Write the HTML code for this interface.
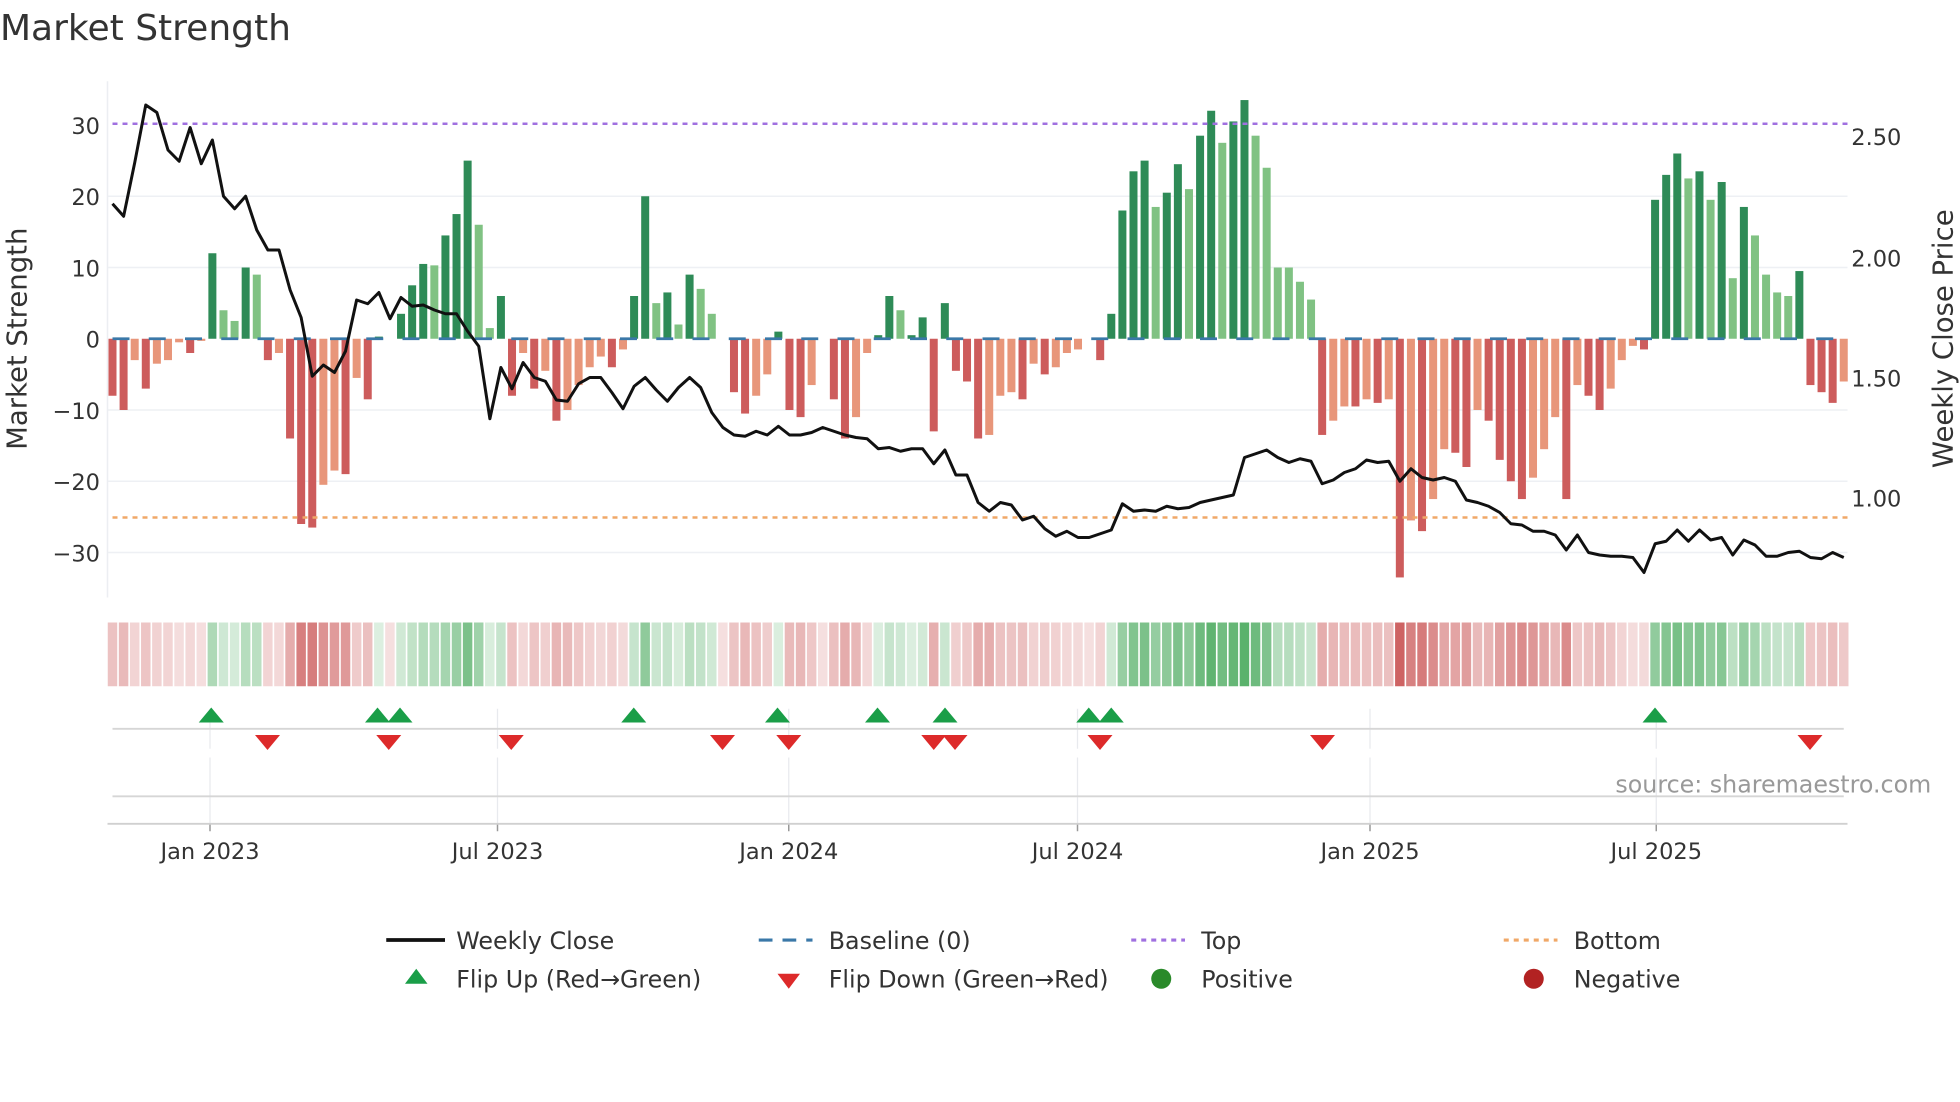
<!DOCTYPE html>
<html><head><meta charset="utf-8"><style>
html,body{margin:0;padding:0;background:#fff;width:1960px;height:1102px;overflow:hidden}
svg{display:block;font-family:"DejaVu Sans","Liberation Sans",sans-serif}
</style></head><body>
<svg id="s" width="1960" height="1102" viewBox="0 0 1568 881.6" xmlns="http://www.w3.org/2000/svg">
<text x="0" y="32" font-size="28.8" fill="#333">Market Strength</text>
<g id="grid"></g>
<g id="bars"></g>
<g id="lines"></g>
<g id="heat"></g>
<g id="marks"></g>
<text x="1545" y="634" font-size="19" fill="#999" text-anchor="end">source: sharemaestro.com</text>
<g font-size="18" fill="#333">
<text x="80" y="107" text-anchor="end">30</text>
<text x="80" y="164" text-anchor="end">20</text>
<text x="80" y="221" text-anchor="end">10</text>
<text x="80" y="278" text-anchor="end">0</text>
<text x="80" y="335" text-anchor="end">−10</text>
<text x="80" y="392" text-anchor="end">−20</text>
<text x="80" y="449" text-anchor="end">−30</text>
<text x="1481" y="116">2.50</text>
<text x="1481" y="213">2.00</text>
<text x="1481" y="309">1.50</text>
<text x="1481" y="405">1.00</text>
<text x="168" y="687" text-anchor="middle">Jan 2023</text>
<text x="398" y="687" text-anchor="middle">Jul 2023</text>
<text x="631" y="687" text-anchor="middle">Jan 2024</text>
<text x="862" y="687" text-anchor="middle">Jul 2024</text>
<text x="1096" y="687" text-anchor="middle">Jan 2025</text>
<text x="1325" y="687" text-anchor="middle">Jul 2025</text>
</g>
<text transform="translate(21,271) rotate(-90)" font-size="22" fill="#333" text-anchor="middle">Market Strength</text>
<text transform="translate(1562,271) rotate(-90)" font-size="22" fill="#333" text-anchor="middle">Weekly Close Price</text>
<g font-size="19" fill="#333">
<line x1="309" y1="752" x2="356" y2="752" stroke="#111" stroke-width="3"/>
<text x="365" y="759">Weekly Close</text>
<line x1="607" y1="752" x2="650" y2="752" stroke="#3a78a8" stroke-width="2.5" stroke-dasharray="11,8"/>
<text x="663" y="759">Baseline (0)</text>
<line x1="905" y1="752" x2="948" y2="752" stroke="#a070e0" stroke-width="2.5" stroke-dasharray="4,4"/>
<text x="961" y="759">Top</text>
<line x1="1203" y1="752" x2="1246" y2="752" stroke="#f0a868" stroke-width="2.5" stroke-dasharray="4,4"/>
<text x="1259" y="759">Bottom</text>
<path d="M333 775 L342 787 L324 787 Z" fill="#1a9e48"/>
<text x="365" y="790">Flip Up (Red→Green)</text>
<path d="M622 779 L640 779 L631 791 Z" fill="#dd2a2a"/>
<text x="663" y="790">Flip Down (Green→Red)</text>
<circle cx="929" cy="783" r="8" fill="#2a8a2a"/>
<text x="961" y="790">Positive</text>
<circle cx="1227" cy="783" r="8" fill="#b22222"/>
<text x="1259" y="790">Negative</text>
</g>
</svg>
<script>
var NS="http://www.w3.org/2000/svg";
function el(p,t,a){var e=document.createElementNS(NS,t);for(var k in a)e.setAttribute(k,a[k]);document.getElementById(p).appendChild(e);return e;}
var B=[[-8,1],[-10,1],[-3,0],[-7,1],[-3.5,0],[-3,0],[-0.5,0],[-2,1],[-0.3,0],[12,1],[4,0],[2.5,0],[10,1],[9,0],[-3,1],[-2,0],[-14,1],[-26,1],[-26.5,1],[-20.5,0],[-18.5,0],[-19,1],[-5.5,0],[-8.5,1],[0.3,1],[0,1],[3.5,1],[7.5,1],[10.5,1],[10.3,0],[14.5,1],[17.5,1],[25,1],[16,0],[1.5,0],[6,1],[-8,1],[-2,0],[-7,1],[-4.5,0],[-11.5,1],[-10,0],[-6.5,0],[-4,0],[-2.5,0],[-4,1],[-1.5,0],[6,1],[20,1],[5,0],[6.5,1],[2,0],[9,1],[7,0],[3.5,0],[0,1],[-7.5,1],[-10.5,1],[-8,0],[-5,0],[1,1],[-10,1],[-11,1],[-6.5,0],[0,1],[-8.5,1],[-14,1],[-11,0],[-2,0],[0.5,1],[6,1],[4,0],[0.5,1],[3,1],[-13,1],[5,1],[-4.5,1],[-6,1],[-14,1],[-13.5,0],[-8,0],[-7.5,0],[-8.5,1],[-3.5,0],[-5,1],[-4,0],[-2,0],[-1.5,0],[0,1],[-3,1],[3.5,1],[18,1],[23.5,1],[25,1],[18.5,0],[20.5,1],[24.5,1],[21,0],[28.5,1],[32,1],[27.5,0],[30.5,1],[33.5,1],[28.5,0],[24,0],[10,0],[10,0],[8,0],[5.5,0],[-13.5,1],[-11.5,0],[-9.5,0],[-9.5,1],[-8.5,0],[-9,1],[-8.5,0],[-33.5,1],[-25.5,0],[-27,1],[-22.5,0],[-15.5,0],[-16,1],[-18,1],[-10,0],[-11.5,1],[-17,1],[-20,1],[-22.5,1],[-19.5,0],[-15.5,0],[-11,0],[-22.5,1],[-6.5,0],[-8,1],[-10,1],[-7,0],[-3,0],[-1,0],[-1.5,1],[19.5,1],[23,1],[26,1],[22.5,0],[23.5,1],[19.5,0],[22,1],[8.5,0],[18.5,1],[14.5,0],[9,0],[6.5,0],[6,0],[9.5,1],[-6.5,1],[-7.5,1],[-9,1],[-6,0]];
var P=[163,173,130,84,90,120,129,102,131,112,157,167,157,184,200,200,232,254,301,292,298,281,240,243,234,255,238,245,244,248,251,251,265,277,335,294,311,290,302,305,320,321,307,302,302,314,327,309,302,312,321,310,302,310,330,342,348,349,345,348,341,348,348,346,342,345,348,350,351,359,358,361,359,359,371,360,380,380,402,409,402,404,416,413,423,429,425,430,430,427,424,403,409,408,409,405,407,406,402,400,398,396,366,363,360,366,370,367,369,387,384,378,375,368,370,369,385,375,382,384,382,385,400,402,405,410,419,420,425,425,428,440,428,442,444,445,445,446,458,435,433,424,433,424,432,430,444,432,436,445,445,442,441,446,447,442,446];
var X0=90,DX=1385/156,Z=271,U=5.7;
[-30,-20,-10,10,20].forEach(function(v){el("grid","line",{x1:86,x2:1478,y1:Z-v*U,y2:Z-v*U,stroke:"#eef0f4","stroke-width":1.2});});
el("grid","line",{x1:86,x2:86,y1:65,y2:478,stroke:"#eceef2","stroke-width":1.2});
[168,398,631,862,1096,1325].forEach(function(x){
 el("grid","line",{x1:x,x2:x,y1:567,y2:599,stroke:"#e8eaee","stroke-width":1});
 el("grid","line",{x1:x,x2:x,y1:606,y2:659,stroke:"#e8eaee","stroke-width":1});
 el("grid","line",{x1:x,x2:x,y1:659,y2:665,stroke:"#999","stroke-width":1.2});
});
el("grid","line",{x1:90,x2:1475,y1:583,y2:583,stroke:"#d6d6d6","stroke-width":1.5});
el("grid","line",{x1:90,x2:1475,y1:637,y2:637,stroke:"#d6d6d6","stroke-width":1.5});
el("grid","line",{x1:86,x2:1478,y1:659,y2:659,stroke:"#d0d0d0","stroke-width":1.5});
var pts=[];
B.forEach(function(b,i){
 var v=b[0],x=X0+i*DX,c;
 if(v>=0)c=b[1]?"#2e8b57":"#80c283";else c=b[1]?"#cd5c5c":"#e8967a";
 var h=Math.abs(v)*U;
 if(h>0.2)el("bars","rect",{x:x-3.2,y:v>=0?Z-h:Z,width:6.4,height:h,fill:c});
 var a=0.18+0.72*Math.min(1,Math.abs(v)/34);
 var hc=v>0?"rgba(70,168,90,"+a+")":"rgba(200,80,80,"+a+")";
 el("heat","rect",{x:x-4.4+0.6,y:498,width:DX-1.3,height:51,fill:hc});
 pts.push(x.toFixed(1)+","+P[i]);
});
el("lines","line",{x1:90,x2:1478,y1:Z,y2:Z,stroke:"#3a78a8","stroke-width":2.2,"stroke-dasharray":"13.6,15.4"});
el("lines","line",{x1:90,x2:1478,y1:99,y2:99,stroke:"#a070e0","stroke-width":2,"stroke-dasharray":"4,4"});
el("lines","line",{x1:90,x2:1478,y1:414,y2:414,stroke:"#f0a868","stroke-width":2,"stroke-dasharray":"4,4"});
el("lines","polyline",{points:pts.join(" "),fill:"none",stroke:"#111","stroke-width":2.4,"stroke-linejoin":"round"});
[169,302,320,507,622,702,756,871,889,1324].forEach(function(x){el("marks","path",{d:"M"+x+" 566 L"+(x+10)+" 578 L"+(x-10)+" 578 Z",fill:"#1a9e48"});});
[214,311,409,578,631,747,764,880,1058,1448].forEach(function(x){el("marks","path",{d:"M"+(x-10)+" 588 L"+(x+10)+" 588 L"+x+" 600 Z",fill:"#dd2a2a"});});
</script>
</body></html>
